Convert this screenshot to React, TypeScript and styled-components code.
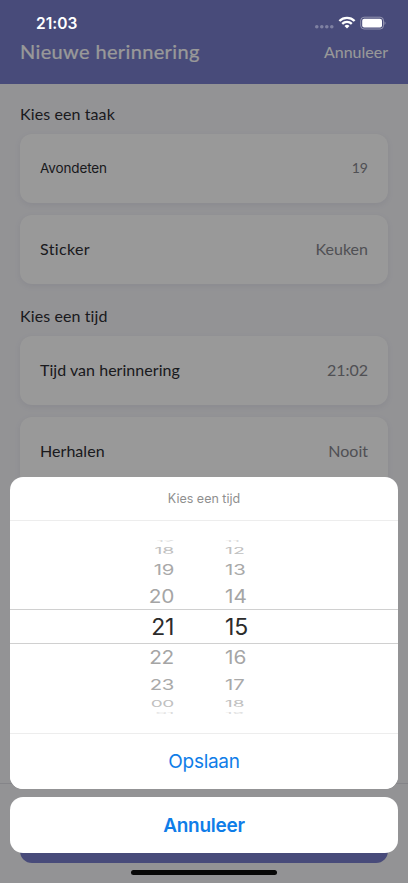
import React from 'react';
import styled, { createGlobalStyle } from 'styled-components';

const appFont = '"Lato", sans-serif';
const systemFont = '"Inter", sans-serif';

const GlobalStyle = createGlobalStyle`
  * { box-sizing: border-box; }
  body { margin: 0; background: #f5f5f9; overflow: hidden; }
`;

const Phone = styled.div`
  position: relative;
  width: 408px;
  height: 883px;
  overflow: hidden;
  font-family: ${appFont};
  font-variant-ligatures: none;
`;

const Screen = styled.div`
  display: flex;
  flex-direction: column;
  height: 100%;
  background: #f5f5f9;
`;

const Header = styled.header`
  display: flex;
  justify-content: space-between;
  align-items: center;
  flex: none;
  height: 84px;
  padding: 19px 20px 0;
  background: #787dcb;
  color: #ffffff;
`;

const Title = styled.h1`
  margin: 0 0 2px;
  font-size: 20px;
  font-weight: 400;
  line-height: 24px;
  letter-spacing: 0.36px;
  -webkit-text-stroke: 0.2px currentColor;
`;

const CancelLink = styled.span`
  font-size: 16px;
  line-height: 24px;
`;

const Content = styled.main`
  display: flex;
  flex-direction: column;
  flex: 1;
  min-height: 0;
  overflow: hidden;
  padding: 18px 20px 0;
`;

const Section = styled.section`
  display: flex;
  flex-direction: column;
  flex: none;
  margin-bottom: 19.8px;
`;

const SectionTitle = styled.h2`
  margin: 0 0 8.4px;
  font-size: 16px;
  font-weight: 400;
  line-height: 24px;
  letter-spacing: 0.1px;
  color: #2d2d33;
`;

const CardList = styled.div`
  display: flex;
  flex-direction: column;
  gap: 12px;
`;

const Card = styled.div`
  display: flex;
  align-items: center;
  justify-content: space-between;
  height: 68.8px;
  padding: 0 20px 2px;
  border-radius: 12px;
  background: #ffffff;
  box-shadow: 0 2px 6px rgba(60, 60, 110, 0.08);
`;

const CardLabel = styled.span<{ $system?: boolean; $spacing?: number }>`
  font-family: ${p => (p.$system ? systemFont : appFont)};
  font-size: ${p => (p.$system ? 13.5 : 16)}px;
  letter-spacing: ${p => p.$spacing ?? 0.05}px;
  color: #2d2d33;
`;

const CardValue = styled.span<{ $small?: boolean }>`
  font-size: ${p => (p.$small ? 14 : 16)}px;
  color: #85858c;
`;

const Footer = styled.footer`
  flex: none;
  height: 100px;
  padding: 23px 20px 20px;
  border-top: 1px solid #dedee4;
`;

const PrimaryButton = styled.div`
  height: 56px;
  border-radius: 12px;
  background: #787dcb;
`;

const Dim = styled.div`
  position: absolute;
  inset: 0;
  background: rgba(0, 0, 0, 0.4);
`;

const StatusBar = styled.div`
  position: absolute;
  top: 12px;
  left: 0;
  right: 0;
  height: 21px;
  display: flex;
  justify-content: space-between;
  align-items: center;
  padding: 0 22px 0 36px;
  color: #ffffff;
`;

const Clock = styled.span`
  padding-top: 2px;
  font-family: ${systemFont};
  font-size: 15.5px;
  font-weight: 600;
`;

const StatusIcons = styled.svg`
  display: block;
`;

const ActionSheet = styled.div`
  position: absolute;
  left: 10px;
  right: 10px;
  bottom: 30px;
  display: flex;
  flex-direction: column;
  gap: 8px;
  font-family: ${systemFont};
`;

const SheetPanel = styled.div`
  display: flex;
  flex-direction: column;
  border-radius: 13px;
  background: #ffffff;
  overflow: hidden;
`;

const SheetTitle = styled.div`
  display: flex;
  align-items: center;
  justify-content: center;
  height: 44px;
  border-bottom: 1px solid #ededed;
  font-size: 12.5px;
  color: #8f8f8f;
`;

const SheetButton = styled.button<{ $bold?: boolean }>`
  height: ${p => (p.$bold ? 56 : 55)}px;
  padding: 0;
  border: 0;
  background: #ffffff;
  font-family: inherit;
  font-size: 19px;
  font-weight: ${p => (p.$bold ? 600 : 400)};
  letter-spacing: ${p => (p.$bold ? -0.26 : -0.3)}px;
  color: #0f7de8;
`;

const Picker = styled.div`
  display: flex;
  flex-direction: column;
  justify-content: center;
  height: 212px;
  padding-bottom: 1px;
`;

const PickerDivider = styled.div`
  height: 1px;
  background: #ededed;
`;

const PickerRow = styled.div<{ $height: number; $selected?: boolean }>`
  display: grid;
  grid-template-columns: 164px 1fr;
  column-gap: 51px;
  align-items: center;
  flex: none;
  height: ${p => p.$height}px;
  border: solid #d0d0d0;
  border-width: ${p => (p.$selected ? '1px 0' : '0')};
`;

const Digits = styled.span<{ $size: number; $squash: number; $tone: string; $end?: boolean; $drop?: number }>`
  justify-self: ${p => (p.$end ? 'end' : 'start')};
  font-size: ${p => p.$size}px;
  line-height: 24px;
  margin: ${p => -11.5 + (p.$drop ?? 0)}px 0 ${p => -12 - (p.$drop ?? 0)}px;
  letter-spacing: ${p => (p.$end ? -0.3 : 0)}px;
  color: ${p => p.$tone};
  transform: scaleY(${p => p.$squash});
`;

const pickerRows = [
  { hour: '17', minute: '11', height: 10, size: 18.5, squash: 0.14, tone: '#dcdcdc' },
  { hour: '18', minute: '12', height: 9.5, size: 19.5, squash: 0.47, tone: '#c0c0c0' },
  { hour: '19', minute: '13', height: 28, size: 20.3, squash: 0.74, tone: '#a9a9a9', drop: 0.5 },
  { hour: '20', minute: '14', height: 26, size: 20.8, squash: 0.9, tone: '#a5a5a5', drop: 0.8 },
  { hour: '21', minute: '15', height: 35, size: 23, squash: 0.98, tone: '#2b2b2b', selected: true },
  { hour: '22', minute: '16', height: 26, size: 20.8, squash: 0.9, tone: '#a5a5a5', drop: 0.8 },
  { hour: '23', minute: '17', height: 28, size: 20.3, squash: 0.74, tone: '#a9a9a9', drop: 0.5 },
  { hour: '00', minute: '18', height: 9.5, size: 19, squash: 0.47, tone: '#c0c0c0', drop: 0.5 },
  { hour: '01', minute: '19', height: 10, size: 18.5, squash: 0.14, tone: '#dcdcdc' },
];

const HomeIndicator = styled.div`
  position: absolute;
  left: 131px;
  bottom: 8px;
  width: 146px;
  height: 5px;
  border-radius: 3px;
  background: #080808;
`;

function DeviceStatus() {
  return (
    <StatusIcons width="72" height="16" viewBox="0 0 72 16">
      <g fill="#ffffff" fillOpacity="0.3">
        <circle cx="2.8" cy="11.8" r="1.8" />
        <circle cx="7.8" cy="11.8" r="1.8" />
        <circle cx="12.8" cy="11.8" r="1.8" />
        <circle cx="17.8" cy="11.8" r="1.8" />
      </g>
      <g fill="none" stroke="#ffffff" strokeWidth="2.3">
        <path d="M25.4 6 A10.8 10.8 0 0 1 40.6 6" />
        <path d="M28.2 8.9 A6.8 6.8 0 0 1 37.8 8.9" />
      </g>
      <path d="M30.5 11 A3.6 3.6 0 0 1 35.5 11 L33 13.5 Z" fill="#ffffff" />
      <rect x="46.7" y="2.2" width="22.8" height="11.8" rx="3.4" fill="none" stroke="#ffffff" strokeOpacity="0.4" />
      <rect x="48.2" y="3.7" width="19.8" height="8.8" rx="2" fill="#ffffff" />
      <path d="M70.6 6.2 Q72.3 8.1 70.6 10 Z" fill="#ffffff" fillOpacity="0.5" />
    </StatusIcons>
  );
}

export default function App() {
  return (
    <Phone>
      <GlobalStyle />
      <Screen>
        <Header>
          <Title>Nieuwe herinnering</Title>
          <CancelLink>Annuleer</CancelLink>
        </Header>
        <Content>
          <Section>
            <SectionTitle>Kies een taak</SectionTitle>
            <CardList>
              <Card>
                <CardLabel $system $spacing={-0.12}>Avondeten</CardLabel>
                <CardValue $small>19</CardValue>
              </Card>
              <Card>
                <CardLabel $spacing={0.35}>Sticker</CardLabel>
                <CardValue>Keuken</CardValue>
              </Card>
            </CardList>
          </Section>
          <Section>
            <SectionTitle>Kies een tijd</SectionTitle>
            <CardList>
              <Card>
                <CardLabel $spacing={0.04}>Tijd van herinnering</CardLabel>
                <CardValue>21:02</CardValue>
              </Card>
              <Card>
                <CardLabel>Herhalen</CardLabel>
                <CardValue>Nooit</CardValue>
              </Card>
            </CardList>
          </Section>
        </Content>
        <Footer>
          <PrimaryButton />
        </Footer>
      </Screen>
      <Dim />
      <StatusBar>
        <Clock>21:03</Clock>
        <DeviceStatus />
      </StatusBar>
      <ActionSheet>
        <SheetPanel>
          <SheetTitle>Kies een tijd</SheetTitle>
          <Picker>
            {pickerRows.map(row => (
              <PickerRow key={row.hour} $height={row.height} $selected={row.selected}>
                <Digits $end $size={row.size} $squash={row.squash} $tone={row.tone} $drop={row.drop}>
                  {row.hour}
                </Digits>
                <Digits $size={row.size} $squash={row.squash} $tone={row.tone} $drop={row.drop}>
                  {row.minute}
                </Digits>
              </PickerRow>
            ))}
          </Picker>
          <PickerDivider />
          <SheetButton>Opslaan</SheetButton>
        </SheetPanel>
        <SheetPanel>
          <SheetButton $bold>Annuleer</SheetButton>
        </SheetPanel>
      </ActionSheet>
      <HomeIndicator />
    </Phone>
  );
}
